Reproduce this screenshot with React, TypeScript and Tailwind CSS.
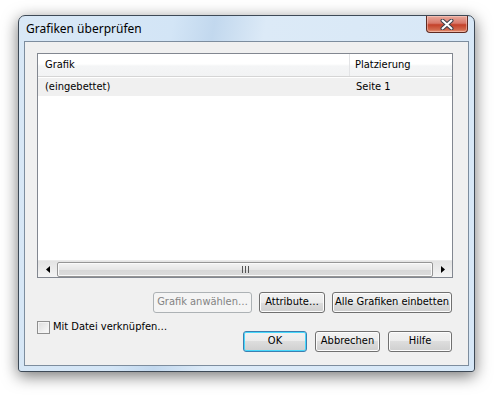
import React from "react";

const uiFont = { fontFamily: '"DejaVu Sans Condensed", "DejaVu Sans", Tahoma, sans-serif' };

function Button({ text, width, disabled, primary }: { text: string; width: string; disabled?: boolean; primary?: boolean }) {
    if (disabled) {
        return (
            <div className={`${width} h-[21px] rounded-[3px] border border-[#adb2b5] bg-[#f4f4f4] flex items-center justify-center text-[11px] text-[#838383]`}>
                {text}
            </div>
        );
    }
    return (
        <div
            className={`${width} h-[21px] rounded-[3px] border ${primary ? "border-[#3c7fb1]" : "border-[#707070]"} flex items-center justify-center text-[11px] text-black ${primary ? "shadow-[inset_0_0_0_1px_#48d8fb]" : "shadow-[inset_0_0_0_1px_#fcfcfc]"} bg-[linear-gradient(#f2f2f2_0%,#ebebeb_50%,#dddddd_50%,#cfcfcf_100%)]`}
        >
            {text}
        </div>
    );
}

function CloseButton() {
    return (
        <div className="w-[42px] h-[17px] rounded-b-[4px] border border-t-0 border-[#5e2a22] bg-[linear-gradient(#e9a99b_0%,#d8786a_45%,#c4412a_55%,#d2694d_85%,#e89a7f_100%)] flex items-center justify-center shadow-[inset_0_0_0_1px_rgba(255,220,210,0.45)]">
            <svg width="14" height="11" viewBox="0 0 14 11">
                <path d="M2.5 1.5 L11.5 9.5 M11.5 1.5 L2.5 9.5" stroke="#3a3f4a" strokeWidth="4" strokeLinecap="round" />
                <path d="M2.5 1.5 L11.5 9.5 M11.5 1.5 L2.5 9.5" stroke="#ffffff" strokeWidth="2" strokeLinecap="round" />
            </svg>
        </div>
    );
}

function ScrollBar() {
    return (
        <div className="h-[17px] flex items-center bg-[linear-gradient(#e3e3e3,#f4f4f4)] border-t border-[#eaeaea]">
            <div className="w-[19px] h-full flex items-center justify-center">
                <svg width="4" height="7" viewBox="0 0 4 7"><path d="M4 0 L0 3.5 L4 7 Z" fill="#000" /></svg>
            </div>
            <div className="flex-1 h-[15px] rounded-[2px] border border-[#959595] bg-[linear-gradient(#f3f3f3,#e6e6e6_50%,#d7d7d7_50%,#dcdcdc)] flex items-center justify-center shadow-[inset_0_0_0_1px_#fafafa]">
                <div className="flex gap-[2px]">
                    <div className="w-px h-[7px] bg-[#555]" />
                    <div className="w-px h-[7px] bg-[#555]" />
                    <div className="w-px h-[7px] bg-[#555]" />
                </div>
            </div>
            <div className="w-[19px] h-full flex items-center justify-center">
                <svg width="4" height="7" viewBox="0 0 4 7"><path d="M0 0 L4 3.5 L0 7 Z" fill="#000" /></svg>
            </div>
        </div>
    );
}

export default function App() {
    return (
        <div className="w-[497px] h-[398px] bg-white overflow-hidden" style={uiFont}>
            <div className="ml-[18px] mt-[15px] w-[457px] h-[357px] rounded-t-[7px] rounded-b-[3px] border border-[#3e4a57] bg-[linear-gradient(100deg,#d9e8f6_0%,#d3e5f6_30%,#c2d8ee_38%,#dceaf7_48%,#d6e7f7_100%)] shadow-[0_4px_16px_rgba(0,0,0,0.55)] flex flex-col">
                {/* Title bar */}
                <div className="h-[26px] flex items-start justify-between pl-[7px] pr-[6px]">
                    <span className="mt-[6px] text-[12px] leading-[14px] text-black" style={{ fontFamily: '"Noto Sans", "Open Sans", sans-serif' }}>
                        Grafiken überprüfen
                    </span>
                    <CloseButton />
                </div>

                {/* Client area */}
                <div className="mx-[5px] mb-[5px] flex-1 border border-[#7d8d9e] bg-[#f0f0f0] flex flex-col px-[12px] pt-[11px] pb-[13px]">
                    {/* List view */}
                    <div className="w-[416px] h-[225px] border border-[#828790] bg-white flex flex-col">
                        <div className="h-[23px] flex text-[11px] bg-[linear-gradient(#ffffff_0%,#ffffff_45%,#f4f5f6_55%,#f2f3f4_100%)] border-b border-[#d5d5d5]">
                            <div className="w-[312px] border-r border-[#e3e4e6] flex items-center pl-[7px]">Grafik</div>
                            <div className="flex-1 flex items-center pl-[5px]">Platzierung</div>
                        </div>
                        <div className="h-[18px] flex text-[11px] bg-[#f0f0f0] mt-px">
                            <div className="w-[312px] flex items-center pl-[7px]">(eingebettet)</div>
                            <div className="flex-1 flex items-center pl-[6px]">Seite 1</div>
                        </div>
                        <div className="flex-1" />
                        <ScrollBar />
                    </div>

                    {/* Buttons row */}
                    <div className="mt-[14px] w-[416px] flex justify-end gap-[7px] pr-px">
                        <Button text="Grafik anwählen…" width="w-[99px]" disabled />
                        <Button text="Attribute…" width="w-[66px]" />
                        <Button text="Alle Grafiken einbetten" width="w-[120px]" />
                    </div>

                    {/* Bottom row */}
                    <div className="w-[416px] flex justify-between items-start">
                        <div className="mt-[6px] flex items-center gap-[3px] text-[11px]">
                            <div className="w-[13px] h-[13px] border border-[#8f8f8f] bg-[linear-gradient(135deg,#dcdcdc,#fbfbfb)] shadow-[inset_0_0_0_1px_#f4f4f4]" />
                            <span>Mit Datei verknüpfen…</span>
                        </div>
                        <div className="mt-[18px] flex gap-[8px] pr-px">
                            <Button text="OK" width="w-[64px]" primary />
                            <Button text="Abbrechen" width="w-[65px]" />
                            <Button text="Hilfe" width="w-[64px]" />
                        </div>
                    </div>
                </div>
            </div>
        </div>
    );
}
